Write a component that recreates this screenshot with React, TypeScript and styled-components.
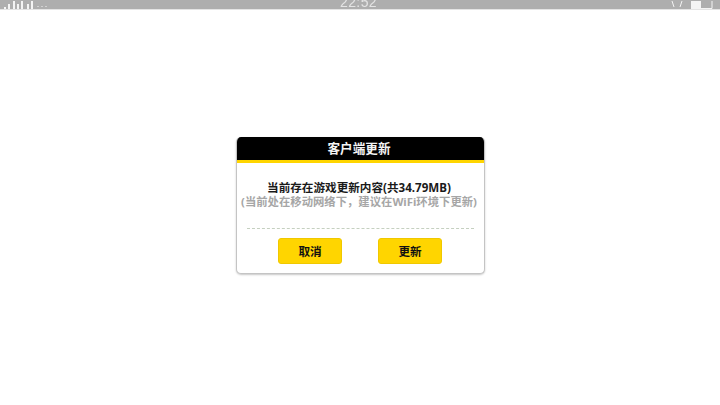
import React from "react";
import styled, { createGlobalStyle } from "styled-components";

const Global = createGlobalStyle`
  html, body { margin: 0; padding: 0; background: #fff; }
  body { width: 720px; height: 405px; overflow: hidden; font-family: "Noto Sans", "Noto Sans CJK SC", sans-serif; }
`;

const Page = styled.div`
  width: 720px;
  height: 405px;
  display: flex;
  flex-direction: column;
  background: #fff;
`;

const StatusBar = styled.div`
  height: 9px;
  flex: none;
  background: #aeaeae;
  border-bottom: 1px solid #e4e4e4;
  box-sizing: content-box;
  display: grid;
  grid-template-columns: 1fr auto 1fr;
  align-items: end;
  padding: 0 6px 0 3px;
  overflow: hidden;
  color: #f2f2f2;
`;

const Signal = styled.div`
  display: flex;
  align-items: flex-end;
  height: 9px;
  gap: 5px;
  filter: blur(0.6px);
`;

const StatusSvg = styled.svg`
  display: block;
`;

const Clock = styled.div`
  font-family: "Liberation Sans", sans-serif;
  font-size: 14px;
  line-height: 14px;
  height: 9px;
  display: flex;
  align-items: flex-end;
  margin-bottom: 1px;
  letter-spacing: 0.4px;
  color: #e4e4e4;
  filter: blur(0.5px);
`;

const Tray = styled.div`
  display: flex;
  justify-content: flex-end;
  align-items: flex-end;
  height: 9px;
  gap: 6px;
  filter: blur(0.5px);
`;

const Main = styled.main`
  flex: 1;
  display: flex;
  justify-content: center;
  align-items: flex-start;
  padding-top: 127px;
`;

const Dialog = styled.section`
  width: 249px;
  height: 137px;
  box-sizing: border-box;
  background: #fff;
  border: 1px solid #c4c4c4;
  border-top: 0;
  border-radius: 5px;
  box-shadow: 0 1px 2px rgba(0, 0, 0, 0.22);
  display: flex;
  flex-direction: column;
  align-items: center;
  overflow: hidden;
`;

const Header = styled.header`
  align-self: stretch;
  height: 23px;
  flex: none;
  background: #000;
  border-bottom: 3px solid #ffd500;
  margin: 0 -1px;
  padding-right: 2px;
  color: #f4f4f4;
  font-size: 12.6px;
  font-weight: 700;
  line-height: 24px;
  text-align: center;
`;

const Message = styled.div`
  margin-top: 18px;
  padding-right: 2px;
  display: flex;
  flex-direction: column;
  align-items: center;
  font-weight: 700;
  line-height: 14px;
  white-space: nowrap;
`;

const Primary = styled.div`
  color: #1a1a1a;
  font-size: 11.6px;
`;

const Secondary = styled.div`
  color: #a6a6a6;
  font-size: 11.35px;
`;

const Divider = styled.hr`
  width: 227px;
  height: 0;
  margin: 19px 0 0;
  border: 0;
  border-top: 1px dashed #c5d0c0;
`;

const Actions = styled.div`
  margin-top: 9px;
  display: flex;
  gap: 36px;
`;

const Button = styled.button`
  width: 64px;
  height: 26px;
  padding: 0;
  border: 1px solid #f0c800;
  border-radius: 3px;
  background: #ffd500;
  color: #111;
  font-family: inherit;
  font-size: 11.6px;
  font-weight: 700;
`;

export default function App() {
  return (
    <Page>
      <Global />
      <StatusBar>
        <Signal>
          <StatusSvg width="44" height="9" viewBox="0 0 44 9" fill="#f4f4f4">
            <rect x="1" y="6" width="2" height="3" />
            <rect x="5" y="3" width="2" height="6" />
            <rect x="10" y="0" width="2" height="9" />
            <rect x="14" y="3" width="2" height="6" />
            <rect x="18" y="0" width="2" height="9" />
            <rect x="24" y="3" width="2" height="6" />
            <rect x="28" y="0" width="2" height="9" />
            <rect x="34" y="5" width="2" height="1" opacity=".5" />
            <rect x="38" y="5" width="2" height="1" opacity=".5" />
            <rect x="42" y="5" width="2" height="1" opacity=".5" />
          </StatusSvg>
        </Signal>
        <Clock>22:52</Clock>
        <Tray>
          <StatusSvg width="44" height="9" viewBox="0 0 44 9" fill="none" stroke="#f4f4f4">
            <path d="M2 0 L4 6 M12 0 L10 6" strokeWidth="1" />
            <path d="M21 7.5 H42 V0" strokeWidth="1" />
            <rect x="21" y="0" width="10" height="7" fill="#f4f4f4" stroke="none" />
          </StatusSvg>
        </Tray>
      </StatusBar>
      <Main>
        <Dialog>
          <Header>客户端更新</Header>
          <Message>
            <Primary>当前存在游戏更新内容(共34.79MB)</Primary>
            <Secondary>(当前处在移动网络下，建议在WiFi环境下更新)</Secondary>
          </Message>
          <Divider />
          <Actions>
            <Button>取消</Button>
            <Button>更新</Button>
          </Actions>
        </Dialog>
      </Main>
    </Page>
  );
}
